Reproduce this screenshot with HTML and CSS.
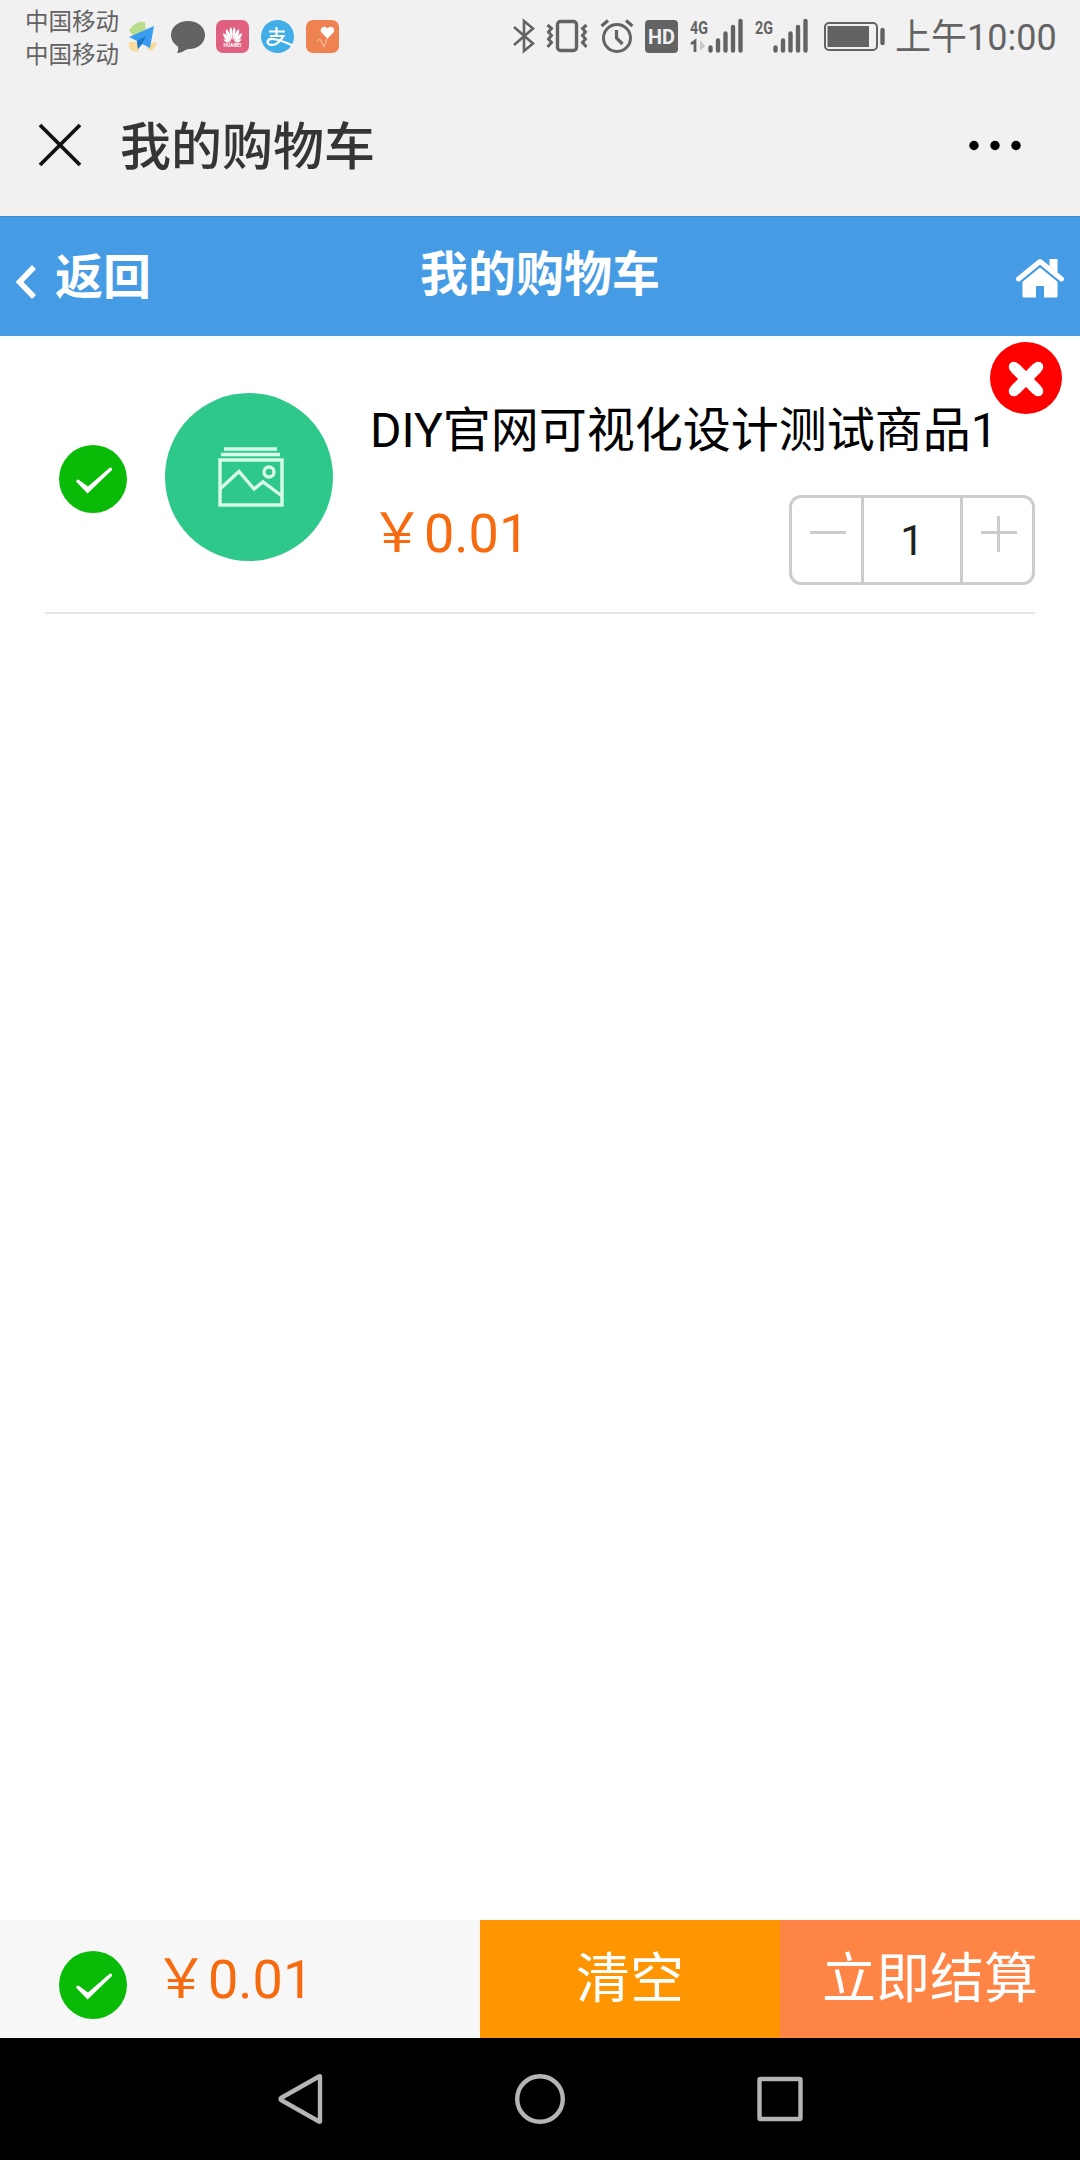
FILE: index.html
```html
<!DOCTYPE html>
<html lang="zh-CN">
  <head>
    <meta charset="UTF-8" />
    <title>我的购物车</title>
    <link rel="stylesheet" href="styles.css" />
  </head>
  <body>
    <div class="status-bar">
      <div class="carriers">
        <p>中国移动</p>
        <p>中国移动</p>
      </div>
      <div class="app-icons">
        <svg width="34" height="34" viewBox="0 0 34 34">
          <path d="M3 10Q10 0 19 2L20 12L8 17Z" fill="#b9dc8c" />
          <path d="M3 22L14 22L12 32L6 31Q2 27 3 22Z" fill="#f5dc98" />
          <path d="M20 28L29 21L31 25L25 31Z" fill="#f5dc98" />
          <path d="M28 6L3 17L11 21L12 29L16 24L24 28Z" fill="#3b9df0" />
          <path d="M20 16L11 21L12 29L16 24Z" fill="#1b78c8" />
        </svg>
        <svg width="34" height="34" viewBox="0 0 34 34">
          <path d="M17 1C26.500 1 34 7 34 15C34 23 27 29 18 29C14 29 12 33 6 33Q8 30 7 26.500C3 24 0 20 0 15C0 7 7.500 1 17 1Z" fill="#636363" />
        </svg>
        <svg width="34" height="34" viewBox="0 0 34 34">
          <rect x="0" y="0" width="33" height="33" rx="7" fill="#e0607f" />
          <g fill="#fff">
            <path d="M16.200 20Q12 12 14.500 7Q17 8 16.200 20Z" />
            <path d="M16.800 20Q21 12 18.500 7Q16 8 16.800 20Z" />
            <path d="M15.500 20.500Q8.500 16 10 9Q14 11 15.500 20.500Z" />
            <path d="M17.500 20.500Q24.500 16 23 9Q19 11 17.500 20.500Z" />
            <path d="M15 21.500Q7 20 7 13Q12 15 15 21.500Z" />
            <path d="M18 21.500Q26 20 26 13Q21 15 18 21.500Z" />
            <path d="M14.500 22Q9 23.500 7.500 19Q11 19.500 14.500 22Z" />
            <path d="M18.500 22Q24 23.500 25.500 19Q22 19.500 18.500 22Z" />
          </g>
          <text class="logo-text" x="16.500" y="27" text-anchor="middle" textLength="18" lengthAdjust="spacingAndGlyphs">HUAWEI</text>
        </svg>
        <svg width="34" height="34" viewBox="0 0 34 34">
          <circle cx="16.500" cy="16.500" r="16.500" fill="#41aee8" />
          <path d="M8 11.500H24M15.500 7V16M9 16H22.500Q19 22 14 24.500Q7 26 6.500 22Q7 18.500 12 19Q20 20 31.500 25.500" fill="none" stroke="#fff" stroke-width="2.200" />
        </svg>
        <svg width="34" height="34" viewBox="0 0 34 34">
          <rect x="0" y="0" width="33" height="33" rx="7" fill="#ee8251" />
          <path d="M21.500 18.500L16 13C12 8.500 18.500 4 21.500 8.500C24.500 4 31 8.500 27 13Z" fill="#fff" />
          <path d="M11 21L14 19L18 27L21 18" fill="none" stroke="#f9c9a4" stroke-width="1" />
        </svg>
      </div>
      <div class="sys-icons">
        <svg width="22" height="36" viewBox="0 0 22 36">
          <path d="M1 9L20 25.500L11 33V3L20 10.500L1 27" fill="none" stroke="#636363" stroke-width="2.600" />
        </svg>
        <svg width="42" height="36" viewBox="0 0 42 36">
          <rect x="11.500" y="3.500" width="19" height="29" rx="3" fill="none" stroke="#636363" stroke-width="3.400" />
          <path d="M1.500 7L5.500 10.500L2.500 14L5.500 17.500L2.500 21L5.500 24.500L1.500 29M40.500 7L36.500 10.500L39.500 14L36.500 17.500L39.500 21L36.500 24.500L40.500 29" fill="none" stroke="#636363" stroke-width="3" />
        </svg>
        <svg class="alarm" width="34" height="36" viewBox="0 0 34 36">
          <circle cx="17" cy="20" r="13.500" fill="none" stroke="#636363" stroke-width="3" />
          <path d="M1.500 8L8 2.500M32.500 8L26 2.500M16.500 12V20L22.500 26" fill="none" stroke="#636363" stroke-width="3.200" />
        </svg>
        <svg width="34" height="36" viewBox="0 0 34 36">
          <rect x="0" y="2" width="33" height="33" rx="4" fill="#636363" />
          <text class="hd" x="16.500" y="26" text-anchor="middle" textLength="27" lengthAdjust="spacingAndGlyphs">HD</text>
        </svg>
        <svg class="signal" width="54" height="36" viewBox="0 0 54 36">
          <text class="net" x="0" y="15.500" textLength="18" lengthAdjust="spacingAndGlyphs">4G</text>
          <path d="M1 26L5 23V34" fill="none" stroke="#636363" stroke-width="2.800" />
          <path d="M10 22L15 28L10 33Z" fill="#c9c9c9" />
          <path d="M20.500 29.500V32.500M28 22.500V32.500M35.500 15.500V32.500M43 9V32.500M50.500 3V32.500" stroke="#636363" stroke-width="4.400" stroke-linecap="round" />
        </svg>
        <svg class="signal" width="54" height="36" viewBox="0 0 54 36">
          <text class="net" x="0" y="15.500" textLength="18" lengthAdjust="spacingAndGlyphs">2G</text>
          <path d="M20.500 29.500V32.500M28 22.500V32.500M35.500 15.500V32.500M43 9V32.500M50.500 3V32.500" stroke="#636363" stroke-width="4.400" stroke-linecap="round" />
        </svg>
        <svg width="62" height="36" viewBox="0 0 62 36">
          <rect x="1" y="5" width="52" height="27" rx="4" fill="none" stroke="#636363" stroke-width="2" />
          <rect x="3.500" y="8" width="41.500" height="21" fill="#636363" />
          <path d="M58.500 12V25" stroke="#636363" stroke-width="4.400" stroke-linecap="round" />
        </svg>
      </div>
      <span class="time">上午10:00</span>
    </div>

    <div class="title-bar">
      <svg width="44" height="44" viewBox="0 0 44 44">
        <path d="M2 1L42 41M42 1L2 41" stroke="#111" stroke-width="3.800" />
      </svg>
      <span class="title">我的购物车</span>
      <svg width="54" height="12" viewBox="0 0 54 12">
        <circle cx="6" cy="5.500" r="4.700" />
        <circle cx="27" cy="5.500" r="4.700" />
        <circle cx="48" cy="5.500" r="4.700" />
      </svg>
    </div>

    <header>
      <a class="back">
        <svg width="22" height="36" viewBox="0 0 22 36">
          <path d="M19 3L4.500 18L19 33" fill="none" stroke="#fff" stroke-width="5.600" />
        </svg>
        <span>返回</span>
      </a>
      <h1>我的购物车</h1>
      <a class="home">
        <svg width="50" height="40" viewBox="0 0 50 40">
          <path d="M25 9L42.500 23V38Q42.500 39.500 41 39.500H29V28H21V39.500H9Q7.500 39.500 7.500 38V23Z" fill="#fff" />
          <path d="M34.500 1H42.500V15L34.500 8Z" fill="#fff" />
          <path d="M3.500 21L25 3.500L46.500 21" fill="none" stroke="#fff" stroke-width="5" stroke-linecap="round" stroke-linejoin="round" />
          <path d="M5 25L25 8.500L45 25" fill="none" stroke="#469be5" stroke-width="1.400" />
        </svg>
      </a>
    </header>

    <main>
      <div class="cart-item">
        <svg class="check" viewBox="0 0 68 68">
          <circle cx="34" cy="34" r="34" fill="#09bb07" />
          <path d="M17 36.500Q18 33.500 20 35L29 41.500L51 22.500Q53.500 22 53 25L28.500 48.500Z" fill="#fff" />
        </svg>
        <svg class="thumb" viewBox="0 0 168 168">
          <circle cx="84" cy="84" r="84" fill="#2fc88b" />
          <g fill="none" stroke="#d9fbea" stroke-width="3.400">
            <path d="M59 56H112M56 61.500H115" />
            <rect x="55" y="67" width="62" height="45" />
            <path d="M55 96L74 78.500L89 96L98 89L117 103" />
            <circle cx="104" cy="79" r="5" />
          </g>
        </svg>
        <div class="info">
          <p class="name">DIY官网可视化设计测试商品1</p>
          <div class="row">
            <span class="price">￥0.01</span>
            <div class="quantity">
              <a class="minus"></a>
              <span class="num">1</span>
              <a class="plus"></a>
            </div>
          </div>
        </div>
        <a class="delete">
          <svg width="72" height="72" viewBox="0 0 72 72">
            <circle cx="36" cy="36" r="36" fill="#f00" />
            <path d="M25 26L47 48M47 26L25 48" stroke="#fff" stroke-width="11" />
            <path d="M24 25L48 49M48 25L24 49" stroke="#fff" stroke-width="10.500" stroke-linecap="round" />
            <path d="M23.500 24.500L48.500 49.500M48.500 24.500L23.500 49.500" stroke="#fff" stroke-width="9" stroke-linecap="round" />
          </svg>
        </a>
      </div>
    </main>

    <div class="cart-bar">
      <div class="total">
        <svg class="check" viewBox="0 0 68 68">
          <circle cx="34" cy="34" r="34" fill="#09bb07" />
          <path d="M17 36.500Q18 33.500 20 35L29 41.500L51 22.500Q53.500 22 53 25L28.500 48.500Z" fill="#fff" />
        </svg>
        <span class="price">￥0.01</span>
      </div>
      <a class="btn clear">清空</a>
      <a class="btn pay">立即结算</a>
    </div>

    <footer>
      <svg width="50" height="54" viewBox="0 0 50 54">
        <path d="M45 4.500V49.500Q45 50 44 49.500L6 28Q5 27 6 26L44 4.500Q45 4 45 4.500Z" fill="none" stroke="#b5b5b5" stroke-width="4.400" stroke-linejoin="round" />
      </svg>
      <svg width="50" height="54" viewBox="0 0 50 54">
        <circle cx="25" cy="27" r="22.800" fill="none" stroke="#b5b5b5" stroke-width="4.400" />
      </svg>
      <svg width="50" height="54" viewBox="0 0 50 54">
        <rect x="4.500" y="7" width="41" height="40" rx="1" fill="none" stroke="#b5b5b5" stroke-width="4.400" />
      </svg>
    </footer>
  </body>
</html>
```
FILE: styles.css
```css
/* Reset default browser styles */
body,
h1,
p {
  margin: 0;
  padding: 0;
}

body {
  display: flex;
  flex-direction: column;
  height: 2160px;
  background-color: #fff;
  font-family: Roboto, "Noto Sans CJK SC", sans-serif;
  overflow: hidden;
}

svg {
  display: block;
  flex-shrink: 0;
  overflow: visible;
}

/* Phone status bar */
.status-bar {
  display: flex;
  align-items: flex-start;
  box-sizing: border-box;
  height: 72px;
  padding-left: 25px;
  background-color: #f1f1f1;
  color: #636363;
}

.carriers {
  width: 101px;
  padding-top: 6px;
  font-size: 23.5px;
  line-height: 33px;
}

.app-icons {
  display: flex;
  gap: 11px;
  padding-top: 20px;
}

.sys-icons {
  display: flex;
  gap: 11px;
  margin-left: 173px;
  padding-top: 18px;
}

.sys-icons .alarm {
  margin-left: 1px;
}

.sys-icons .signal + .signal {
  margin-right: 4px;
}

.logo-text {
  fill: #fff;
  font-size: 5px;
  font-weight: bold;
}

.hd {
  fill: #f1f1f1;
  font-size: 21px;
  font-weight: bold;
}

.net {
  fill: #636363;
  font-size: 18px;
  font-weight: bold;
}

.time {
  margin-left: 9px;
  padding-top: 15px;
  font-size: 36px;
  line-height: 46px;
  white-space: nowrap;
}

/* Browser title bar */
.title-bar {
  display: flex;
  align-items: center;
  box-sizing: border-box;
  height: 144px;
  padding: 3px 58px 0 38px;
  background-color: #f1f1f1;
}

.title {
  flex: 1;
  margin-left: 38px;
  padding-top: 5px;
  font-size: 51px;
  font-weight: 500;
  line-height: 60px;
  color: #353535;
}

/* Page header */
header {
  display: grid;
  grid-template-columns: 1fr auto 1fr;
  box-sizing: border-box;
  height: 120px;
  padding: 0 15px;
  border-top: 1px solid #4289c9;
  background-color: #469be5;
  color: #fff;
}

.back {
  display: flex;
  align-items: center;
  gap: 18px;
  padding-top: 11px;
  font-size: 48px;
  font-weight: bold;
}

.back span {
  padding-bottom: 8px;
  line-height: 60px;
}

h1 {
  font-size: 48px;
  font-weight: bold;
  line-height: 115px;
}

.home {
  justify-self: end;
  padding-top: 41px;
}

/* Cart list */
main {
  flex: 1;
  padding: 0 45px;
}

.cart-item {
  position: relative;
  display: flex;
  align-items: center;
  box-sizing: border-box;
  height: 278px;
  padding: 6px 0 0 14px;
  border-bottom: 2px solid #e5e5e5;
}

.check {
  width: 68px;
  height: 68px;
}

.cart-item .check {
  margin-top: 4px;
}

.thumb {
  width: 168px;
  height: 168px;
  margin-left: 38px;
}

.info {
  flex: 1;
  align-self: stretch;
  margin-left: 37px;
  padding-top: 57px;
}

.name {
  font-size: 48px;
  line-height: 64px;
  color: #000;
  white-space: nowrap;
}

.row {
  display: flex;
  justify-content: space-between;
  margin-top: 32px;
}

.price {
  font-size: 54px;
  line-height: 78px;
  color: #f76b10;
}

.quantity {
  display: flex;
  box-sizing: border-box;
  width: 246px;
  height: 90px;
  border: 3px solid #ccc;
  border-radius: 12px;
}

.minus,
.plus {
  flex: 1;
  background: linear-gradient(#ccc, #ccc) 18px 33px / 36px 3px no-repeat;
}

.plus {
  background:
    linear-gradient(#ccc, #ccc) 18px 33px / 36px 3px no-repeat,
    linear-gradient(#ccc, #ccc) 34px 18px / 3px 36px no-repeat;
}

.num {
  width: 96px;
  border-left: 3px solid #ccc;
  border-right: 3px solid #ccc;
  font-size: 42px;
  line-height: 85px;
  text-align: center;
  color: #222;
}

/* sits over the corner of the item */
.delete {
  position: absolute;
  top: 6px;
  right: -27px;
}

/* Bottom cart bar */
.cart-bar {
  display: grid;
  grid-template-columns: 480px 300px 300px;
  height: 118px;
  background-color: #f7f7f7;
}

.total {
  display: flex;
  align-items: flex-start;
  padding-left: 59px;
}

.total .check {
  margin-top: 31px;
}

.total .price {
  margin-left: 27px;
  padding-top: 21px;
}

.btn {
  font-size: 54px;
  line-height: 120px;
  text-align: center;
  color: #fff;
}

.clear {
  background-color: #ff9500;
}

.pay {
  background-color: #ff8547;
}

/* Phone navigation keys */
footer {
  display: flex;
  justify-content: center;
  align-items: center;
  gap: 190px;
  height: 122px;
  background-color: #000;
}
```
